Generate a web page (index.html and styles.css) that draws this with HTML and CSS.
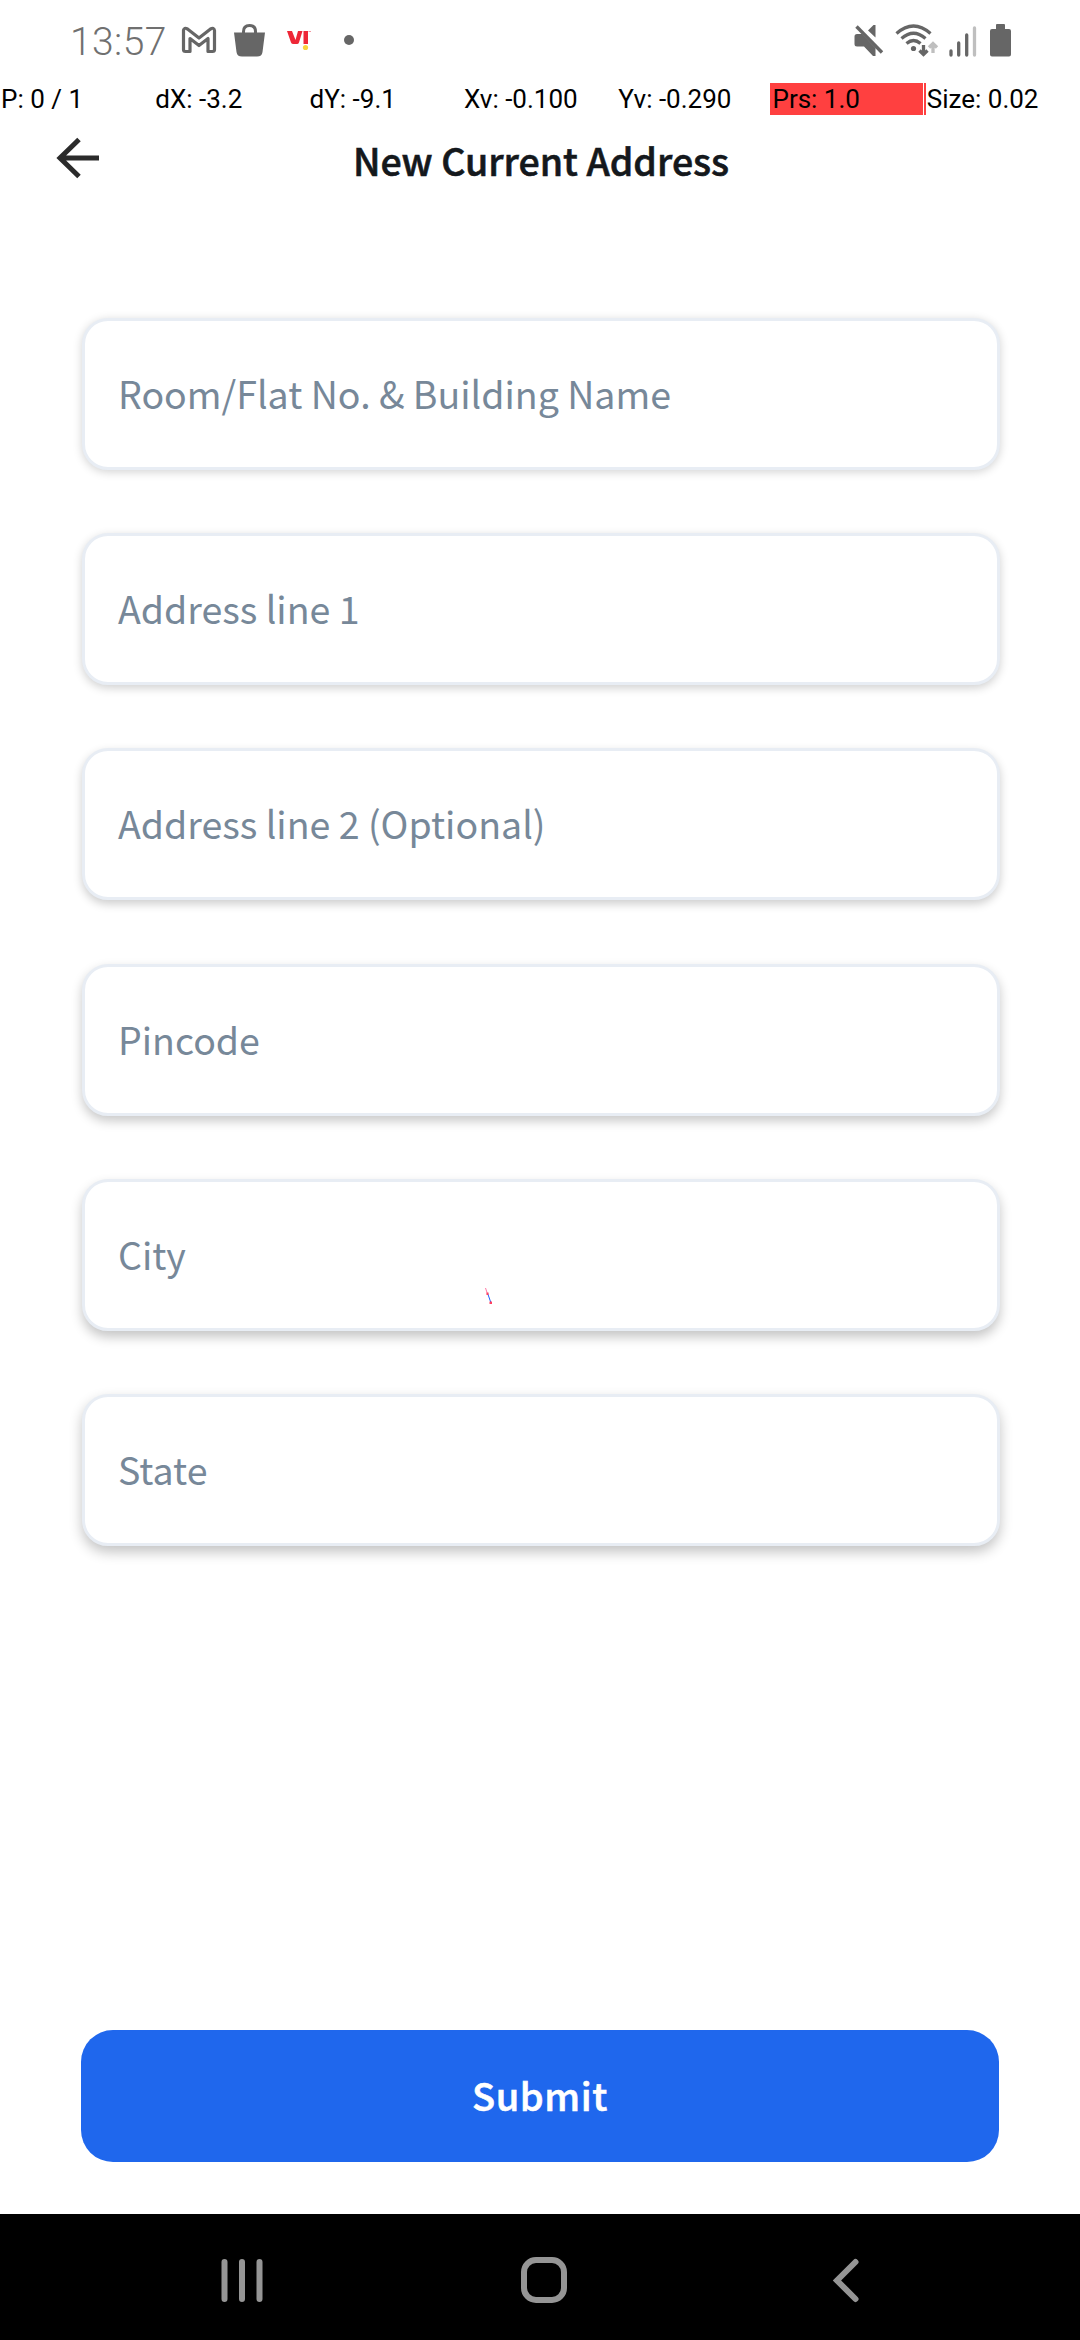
FILE: index.html
```html
<!DOCTYPE html>
<html lang="en">
<head>
<meta charset="utf-8">
<title>New Current Address</title>
<link rel="stylesheet" href="styles.css">
</head>
<body>
<div class="screen">
  <div class="status">
    <span class="clock">13:57</span>
    <svg class="notices" width="180" height="50" viewBox="180 15 180 50">
      <path d="M183.500 30V49.500Q183.500 51.500 185.500 51.500H190V38.500L199 45.500L208 38.500V51.500H212.500Q214.500 51.500 214.500 49.500V30.500Q214 27 210.500 29L199 38L187.500 29Q184 27 183.500 30.500Z" fill="none" stroke="#666" stroke-width="3.200" stroke-linejoin="round"/>
      <path d="M234 32.500H265L262.500 52Q262 56.500 257 56.500H242Q237 56.500 236.500 52Z" fill="#666"/>
      <path d="M243.500 34V31.500Q243.500 25.500 249.500 25.500T255.500 31.500V34" fill="none" stroke="#666" stroke-width="3"/>
      <path d="M287 31H292L295.500 40L298 31H302.500L299 42.500Q298.500 44 297 44H293.500Q291.500 44 291 42.500ZM303.500 31H308V44H303.500Z" fill="#ee2737"/>
      <path d="M308.500 31.500H311" stroke="#f29aa2"/>
      <circle cx="305.500" cy="47.500" r="2.600" fill="#f9d33c"/>
      <circle cx="349" cy="40" r="5" fill="#666"/>
    </svg>
    <svg class="system" width="175" height="50" viewBox="845 15 175 50">
      <g fill="#666">
        <path d="M857 34H862L875.500 48V56H873L864 46.500H857Q854.500 46.500 854.500 44V36.500Q854.500 34 857 34Z"/>
        <path d="M875.500 25V37.500L868 30.500L873.500 25Z"/>
        <path d="M856.500 26.500L882 52.500" stroke="#666" stroke-width="3.400"/>
        <circle cx="913.500" cy="48.500" r="2.600"/>
        <path d="M990 31Q990 29 992 29H996V25Q996 24 997 24H1004Q1005 24 1005 25V29H1009Q1011 29 1011 31V54.500Q1011 56.500 1009 56.500H992Q990 56.500 990 54.500Z"/>
      </g>
      <g fill="none" stroke="#666" stroke-width="3.300">
        <path d="M896.500 33.500Q913.500 18.500 930.500 33.500M901.500 38.500Q913.500 28 925.500 38.500M906.500 43.500Q913.500 37.500 920.500 43.500M923.500 45V54M919.500 50.500L923.500 54.500L927.500 50.500"/>
        <path d="M933 53V44M929 47.500L933 43.500L937 47.500" stroke="#bfbfbf"/>
        <path d="M951 51V55M958.700 43V55M966.700 35V55" stroke-linecap="round"/>
        <path d="M974.500 28V55" stroke="#bfbfbf" stroke-linecap="round"/>
      </g>
    </svg>
  </div>
  <div class="readout">
    <span>P: 0 / 1</span><span>dX: -3.2</span><span>dY: -9.1</span><span>Xv: -0.100</span><span>Yv: -0.290</span><span class="pressure">Prs: 1.0</span><span>Size: 0.02</span>
  </div>
  <header class="header">
    <svg class="back" width="44" height="44" viewBox="56 136 44 44"><path d="M99 158H60M79 139.500L60 158L79 176.500" fill="none" stroke="#2b2b2b" stroke-width="5"/></svg>
    <h1 class="title">New Current Address</h1>
  </header>
  <main class="form">
    <div class="field f1"><span>Room/Flat No. &amp; Building Name</span></div>
    <div class="field f2"><span>Address line 1</span></div>
    <div class="field f3"><span>Address line 2 (Optional)</span></div>
    <div class="field f4"><span>Pincode</span></div>
    <div class="field f5"><span>City</span></div>
    <div class="field f6"><span>State</span></div>
  </main>
  <button class="submit"><span>Submit</span></button>
  <nav class="nav">
    <svg width="50" height="50" viewBox="0 0 50 50"><path d="M7.500 7V44M25 7V44M42.500 7V44" /></svg>
    <svg width="50" height="50" viewBox="0 0 50 50"><rect x="5" y="5" width="40" height="40" rx="12"/></svg>
    <svg width="50" height="50" viewBox="0 0 50 50"><path d="M34.500 7L16 25.500L34.500 44"/></svg>
  </nav>
  <svg class="trail" width="12" height="20" viewBox="482 1285 12 20"><path d="M485.500 1288L487.500 1294" stroke="#ff7aa5"/><path d="M487.500 1293L491 1303" stroke="#1e60ff"/><path d="M486.500 1292.500H488.500V1295H486.500ZM489.500 1301.500H492V1304H489.500Z" fill="#ff4060"/></svg>
</div>
</body>
</html>
```
FILE: styles.css
```css
* { box-sizing: border-box; }
body { margin: 0; background: #fff; }
.screen {
  position: relative;
  display: flex;
  flex-direction: column;
  width: 1080px;
  height: 2340px;
  background: #fff;
  font-family: "Noto Sans CJK SC", "Noto Sans", sans-serif;
}
.status { display: flex; height: 83px; padding: 15px 60px 0 70px; }
.clock {
  width: 110px;
  padding-top: 2px;
  font: 350 39px/50px Roboto, sans-serif;
  letter-spacing: .4px;
  color: #707070;
}
.system { margin-left: auto; }
.readout {
  display: grid;
  grid-template-columns: repeat(7, 154.3px);
  height: 32px;
  overflow: hidden;
  font: 400 26px/33px Roboto, sans-serif;
  color: #000;
}
.readout span { padding-left: 1px; white-space: nowrap; }
.readout .pressure {
  margin-left: -1px;
  padding-left: 2px;
  background: linear-gradient(90deg, #ff4040 153px, #fff 153px, #fff 154px, #ff4040 154px);
}
.header { display: flex; align-items: center; height: 87px; padding: 0 56px; }
.back { margin-top: -1px; }
.title {
  flex: 1;
  margin: 3px 42px 0 0;
  font-size: 37.5px;
  line-height: 56px;
  font-weight: 500;
  -webkit-text-stroke: .6px #14181c;
  color: #14181c;
  text-align: center;
  white-space: nowrap;
}
.form {
  display: flex;
  flex-direction: column;
  gap: 63.200px;
  margin-top: 116px;
  padding: 0 80px 0 82px;
}
.field {
  display: flex;
  align-items: center;
  height: 152px;
  padding: 0 33px 2px;
  border: 3px solid #e8edf4;
  border-radius: 26px;
  background: #fff;
  font-size: 37.5px;
  line-height: 56px;
  color: #778899;
  white-space: nowrap;
}
.f1 { box-shadow: 0 2px 10px rgba(0, 0, 0, .18); }
.f2 { box-shadow: 0 3px 10px rgba(0, 0, 0, .19); }
.f3 { box-shadow: 0 4px 10px rgba(0, 0, 0, .20); }
.f4 { box-shadow: 0 5px 11px rgba(0, 0, 0, .22); }
.f5 { box-shadow: 0 6px 12px rgba(0, 0, 0, .23); }
.f6 { box-shadow: 0 6px 13px rgba(0, 0, 0, .24); }
.submit {
  height: 132px;
  margin: auto 81px 52px;
  padding: 0 0 3px;
  border: 0;
  border-radius: 32px;
  background: #1f67ed;
  color: #fff;
  font: 500 38px/56px "Noto Sans CJK SC", "Noto Sans", sans-serif;
  letter-spacing: .6px;
  -webkit-text-stroke: .6px #fff;
}
.nav {
  display: flex;
  align-items: center;
  justify-content: center;
  gap: 252px;
  height: 126px;
  padding: 6px 0 0 7px;
  background: #000;
}
.nav svg { fill: none; stroke: #959595; stroke-width: 6; stroke-linecap: round; }
.trail { position: absolute; left: 482px; top: 1285px; }
```
